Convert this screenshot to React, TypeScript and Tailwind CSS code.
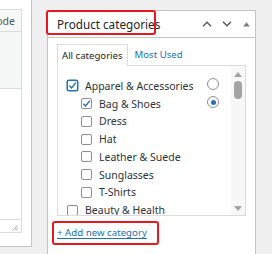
import React from 'react';

type Cat = { name: string; level: 0 | 1; checked?: boolean; focus?: boolean; radio?: 'off' | 'on' };

const CATS: Cat[] = [
  { name: 'Apparel & Accessories', level: 0, checked: true, focus: true, radio: 'off' },
  { name: 'Bag & Shoes', level: 1, checked: true, radio: 'on' },
  { name: 'Dress', level: 1 },
  { name: 'Hat', level: 1 },
  { name: 'Leather & Suede', level: 1 },
  { name: 'Sunglasses', level: 1 },
  { name: 'T-Shirts', level: 1 },
  { name: 'Beauty & Health', level: 0 },
];

function Checkbox({ checked, focus }: { checked?: boolean; focus?: boolean }) {
  return (
    <span
      className={`w-[11px] h-[11px] shrink-0 rounded-[2px] bg-white flex items-center justify-center ${
        focus ? 'border-[1.5px] border-[#2271b1] shadow-[0_0_0_0.5px_#2271b1]' : 'border border-[#8c8f94]'
      }`}
    >
      {checked && (
        <svg width="9" height="9" viewBox="0 0 10 10">
          <path d="M1.5 5.2 L4 7.6 L8.8 1.8" fill="none" stroke="#2271b1" strokeWidth="1.6" />
        </svg>
      )}
    </span>
  );
}

export default function App() {
  return (
    <div className="w-[272px] h-[254px] bg-[#f0f0f1] flex overflow-hidden relative font-['Noto_Sans',sans-serif]">
      {/* editor postbox tail on the left */}
      <div className="w-[32px] h-[247px] shrink-0 bg-white border-r border-b border-[#c3c4c7] pt-[9px]">
        <div className="w-[22px] h-[224px] border-t border-r border-b border-[#dcdcde] flex flex-col">
          <div className="h-[22px] bg-[#f6f7f7] border-b border-[#dcdcde] overflow-hidden flex items-center justify-end pr-[6px]">
            <span className="text-[10.5px] leading-[14px] text-[#50575e] whitespace-nowrap">Code</span>
          </div>
          <div className="h-[57px] bg-[#f6f7f7] border-b border-[#dcdcde]" />
          <div className="flex-1 bg-white" />
          <div className="h-[13px] border-t border-[#dcdcde] bg-white flex items-end justify-end pr-[3px] pb-[1px]">
            <svg width="6" height="6" viewBox="0 0 6 6">
              <path d="M5.5 0.5 L0.5 5.5 M5.5 3 L3 5.5" stroke="#a7aaad" strokeWidth="1" />
            </svg>
          </div>
        </div>
      </div>

      {/* product categories postbox */}
      <div className="ml-[15px] mt-[10px] w-[209px] h-[260px] shrink-0 bg-white border border-[#c3c4c7] flex flex-col">
        <div className="h-[27px] border-b border-[#c3c4c7] flex items-center pl-[9px] pr-[5px]">
          <span className="text-[11.7px] leading-[16px] text-[#1d2327] whitespace-nowrap">Product categories</span>
          <div className="ml-auto flex items-center">
            <svg width="10" height="6" viewBox="0 0 10 6" className="mr-[10px]">
              <path d="M1 5.2 L5 1.2 L9 5.2" fill="none" stroke="#50575e" strokeWidth="1.4" />
            </svg>
            <svg width="10" height="6" viewBox="0 0 10 6" className="mr-[11px]">
              <path d="M1 0.8 L5 4.8 L9 0.8" fill="none" stroke="#50575e" strokeWidth="1.4" />
            </svg>
            <svg width="7" height="5" viewBox="0 0 7 5">
              <path d="M3.5 0.3 L6.8 4.6 L0.2 4.6 Z" fill="#787c82" />
            </svg>
          </div>
        </div>

        <div className="px-[9px] pt-[6px]">
          <div className="flex items-end h-[21px]">
            <div className="h-[22px] -mb-px relative z-10 px-[4px] border border-b-0 border-[#dcdcde] bg-white flex items-center text-[9.6px] leading-[13px] text-[#1d2327] whitespace-nowrap">
              All categories
            </div>
            <div className="h-[21px] flex items-center ml-[7px] text-[9.6px] leading-[13px] text-[#2271b1] whitespace-nowrap">
              Most Used
            </div>
          </div>
          <div className="h-[151px] border border-[#dcdcde] flex overflow-hidden">
            <div className="flex-1 pt-[11px] pl-[9px]">
              {CATS.map((c) => (
                <div key={c.name} className={`h-[17.75px] flex items-center ${c.level ? 'pl-[14px]' : ''}`}>
                  <Checkbox checked={c.checked} focus={c.focus} />
                  <span className="ml-[7px] text-[10.5px] leading-[14px] text-[#2c3338] whitespace-nowrap">{c.name}</span>
                  {c.radio && (
                    <span className="ml-auto mr-[12px] -mt-[3px] w-[12px] h-[12px] rounded-full border border-[#8c8f94] bg-white flex items-center justify-center">
                      {c.radio === 'on' && <span className="w-[5px] h-[5px] rounded-full bg-[#2271b1]" />}
                    </span>
                  )}
                </div>
              ))}
            </div>
            <div className="w-[14px] bg-[#f7f7f7] flex flex-col items-center pt-[6px] pb-[4px]">
              <svg width="8" height="5" viewBox="0 0 8 5">
                <path d="M4 0 L8 5 L0 5 Z" fill="#a3a3a3" />
              </svg>
              <div className="w-[8px] h-[18px] mt-[4px] rounded-full bg-[#a3a3a3]" />
              <div className="flex-1" />
              <svg width="8" height="5" viewBox="0 0 8 5">
                <path d="M0 0 L8 0 L4 5 Z" fill="#a3a3a3" />
              </svg>
            </div>
          </div>
          <div className="pt-[10px] text-[9.7px] leading-[14px]">
            <span className="text-[#2271b1] underline underline-offset-[1.5px] whitespace-nowrap">+ Add new category</span>
          </div>
        </div>
      </div>

      {/* red highlight boxes */}
      <div className="absolute left-[46px] top-[10px] w-[110px] h-[25px] border-[2px] border-[#e5191e] rounded-[3px] pointer-events-none" />
      <div className="absolute left-[52px] top-[221px] w-[107px] h-[24px] border-[2px] border-[#e5191e] rounded-[3px] pointer-events-none" />
    </div>
  );
}
